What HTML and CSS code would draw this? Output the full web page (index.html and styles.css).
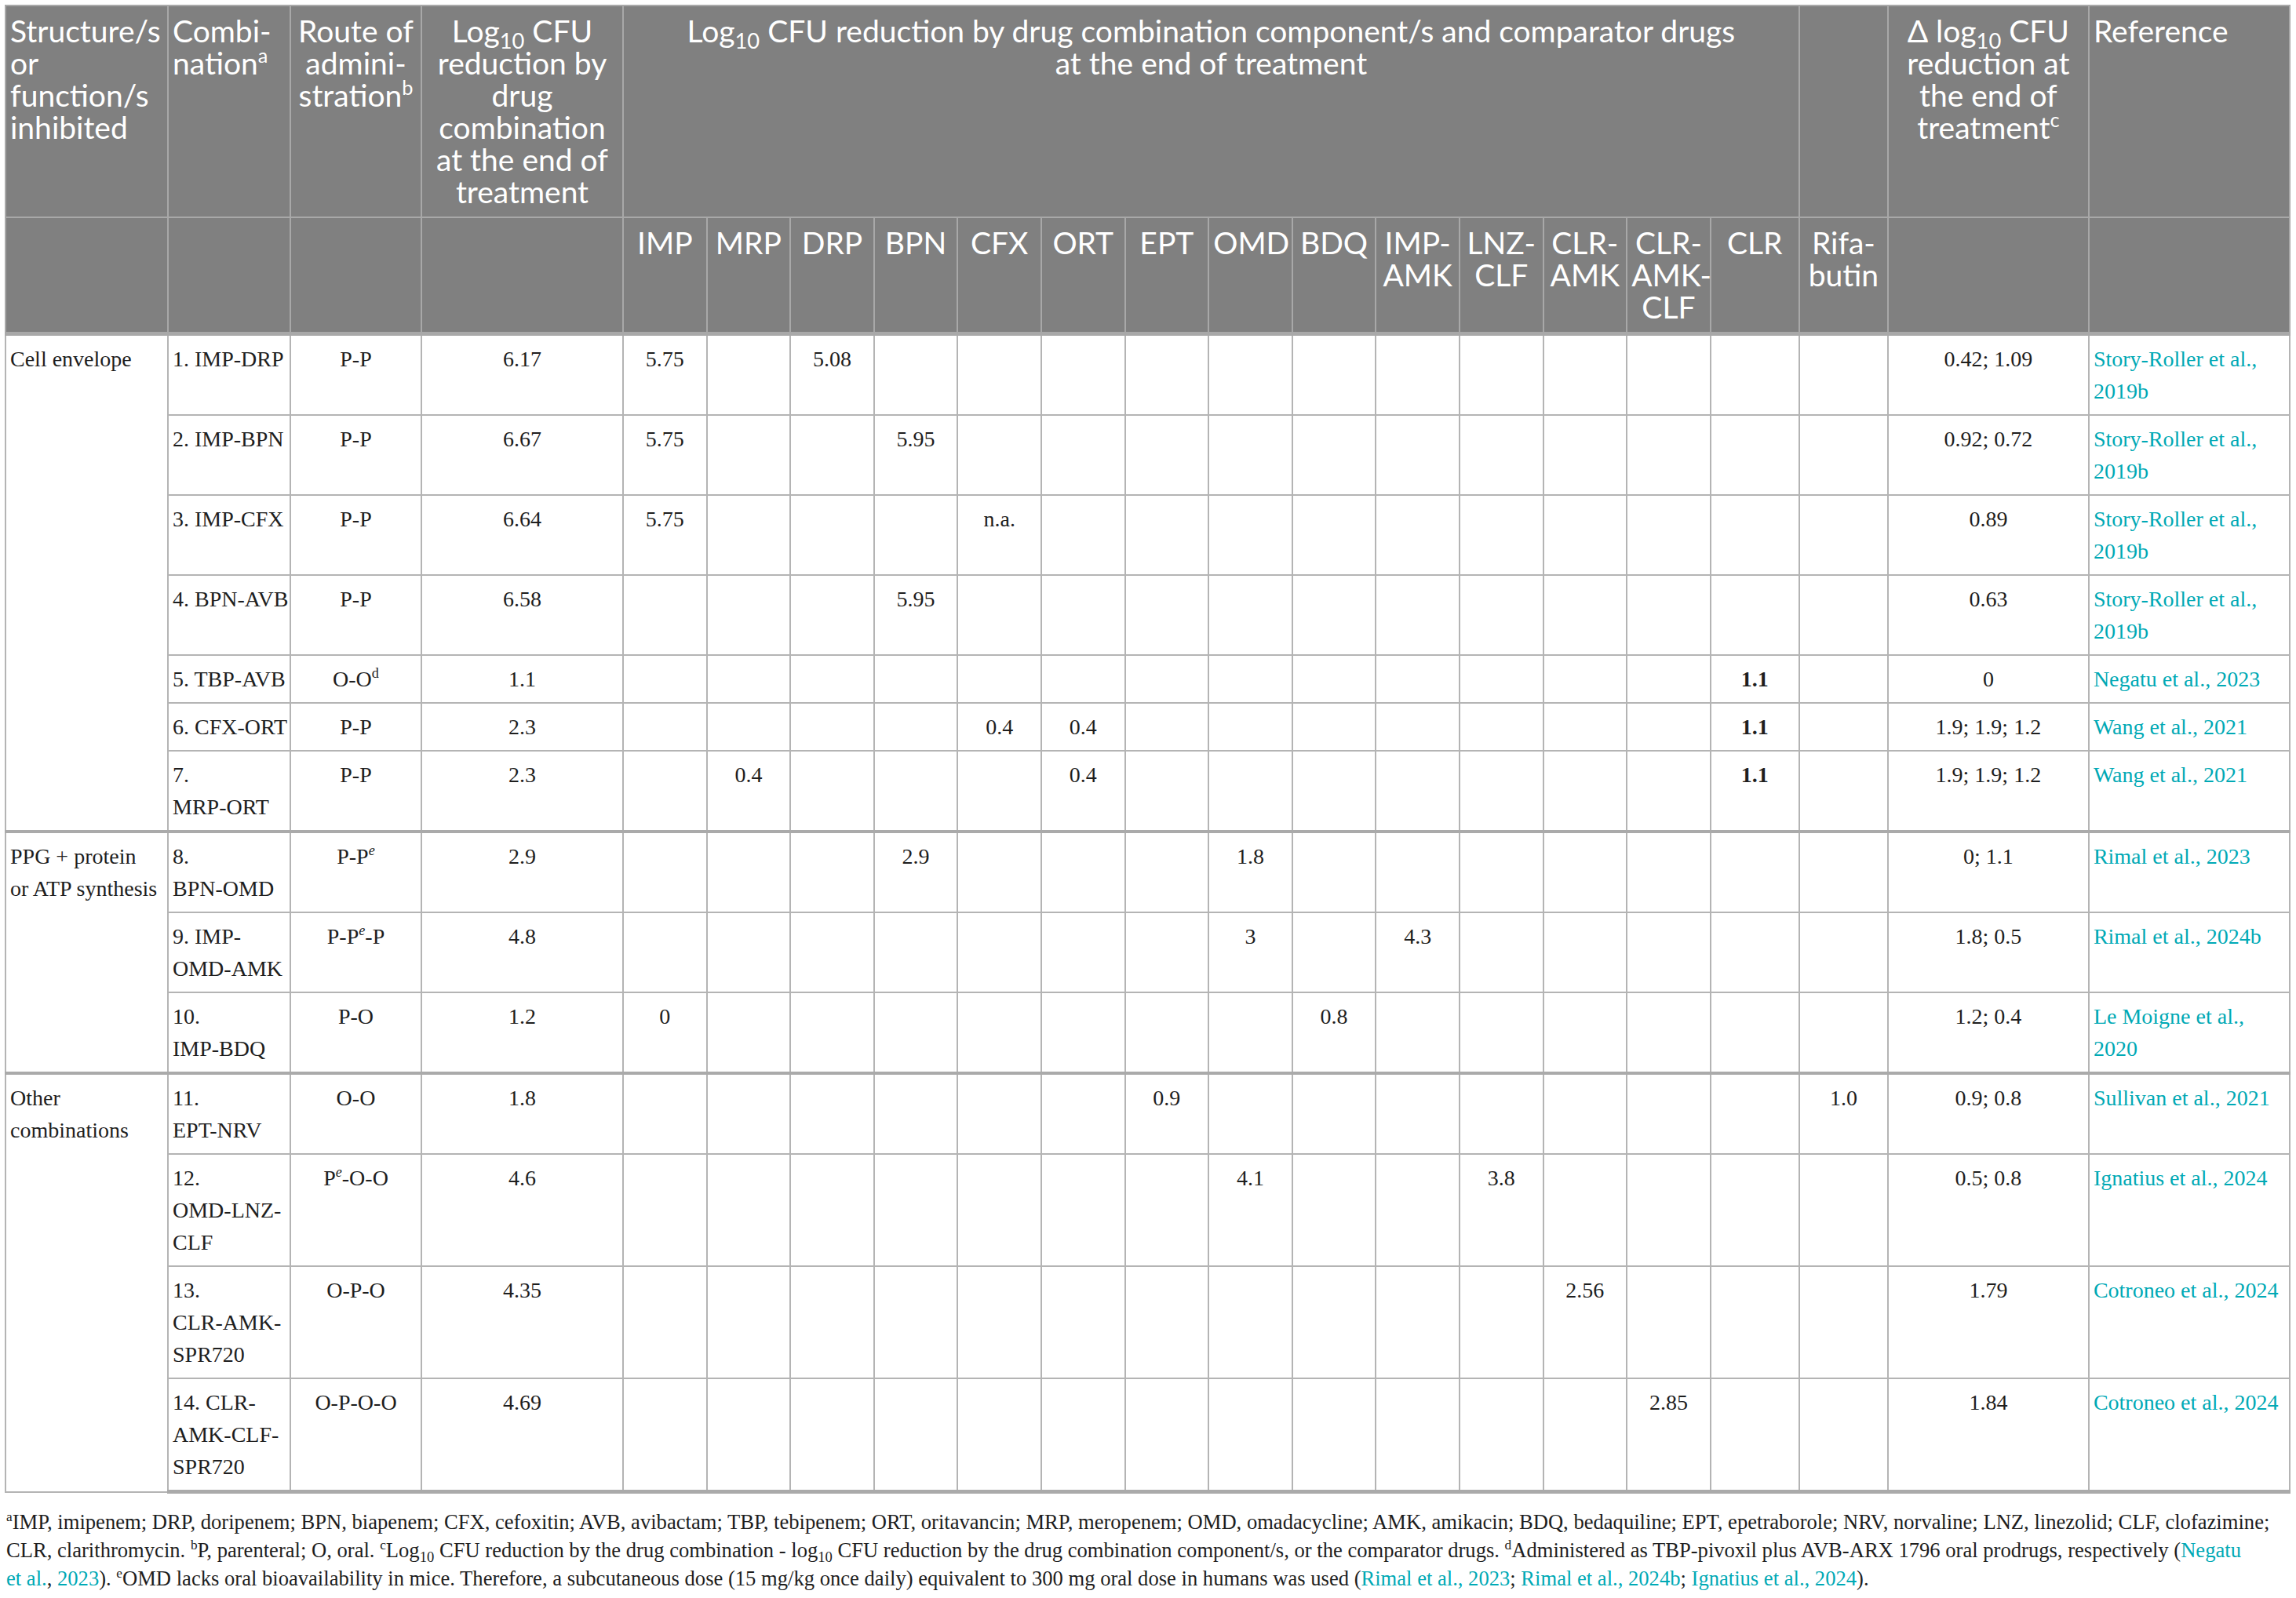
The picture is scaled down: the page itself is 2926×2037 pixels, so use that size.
FILE: index.html
```html
<!DOCTYPE html>
<html lang="en">
<head>
    <meta charset="UTF-8">
    <meta name="viewport" content="width=device-width, initial-scale=1.0">
    <title>Log10 CFU reduction by drug combinations</title>
    <link rel="stylesheet" href="styles.css">
</head>
<body>

    <table class="cfu-table">
        <colgroup>
            <col class="w-group">
            <col class="w-combo">
            <col class="w-route">
            <col class="w-total">
            <col class="w-drug"><col class="w-drug"><col class="w-drug"><col class="w-drug"><col class="w-drug">
            <col class="w-drug"><col class="w-drug"><col class="w-drug"><col class="w-drug"><col class="w-drug">
            <col class="w-drug"><col class="w-drug"><col class="w-drug">
            <col class="w-clr">
            <col class="w-clr">
            <col class="w-delta">
            <col class="w-ref">
        </colgroup>
        <thead>
            <tr>
                <th class="left">Structure/s<br>or<br>function/s<br>inhibited</th>
                <th class="left">Combi-<br>nation<sup>a</sup></th>
                <th>Route of<br>admini-<br>stration<sup>b</sup></th>
                <th>Log<sub>10</sub> CFU<br>reduction by<br>drug<br>combination<br>at the end of<br>treatment</th>
                <th colspan="14">Log<sub>10</sub> CFU reduction by drug combination component/s and comparator drugs<br>at the end of treatment</th>
                <th></th>
                <th>&Delta; log<sub>10</sub> CFU<br>reduction at<br>the end of<br>treatment<sup>c</sup></th>
                <th class="left">Reference</th>
            </tr>
            <tr class="drug-names">
                <th></th>
                <th></th>
                <th></th>
                <th></th>
                <th>IMP</th>
                <th>MRP</th>
                <th>DRP</th>
                <th>BPN</th>
                <th>CFX</th>
                <th>ORT</th>
                <th>EPT</th>
                <th>OMD</th>
                <th>BDQ</th>
                <th>IMP-<br>AMK</th>
                <th>LNZ-<br>CLF</th>
                <th>CLR-<br>AMK</th>
                <th>CLR-<br>AMK-<br>CLF</th>
                <th>CLR</th>
                <th>Rifa-<br>butin</th>
                <th></th>
                <th></th>
            </tr>
        </thead>
        <tbody>
            <!-- Cell envelope -->
            <tr>
                <td class="left" rowspan="7">Cell envelope</td>
                <td class="left">1. IMP-DRP</td>
                <td>P-P</td>
                <td>6.17</td>
                <td>5.75</td><td></td><td>5.08</td><td></td><td></td><td></td><td></td><td></td><td></td><td></td><td></td><td></td><td></td><td></td><td></td>
                <td>0.42; 1.09</td>
                <td class="left"><a href="#">Story-Roller et al.,<br>2019b</a></td>
            </tr>
            <tr>
                <td class="left">2. IMP-BPN</td>
                <td>P-P</td>
                <td>6.67</td>
                <td>5.75</td><td></td><td></td><td>5.95</td><td></td><td></td><td></td><td></td><td></td><td></td><td></td><td></td><td></td><td></td><td></td>
                <td>0.92; 0.72</td>
                <td class="left"><a href="#">Story-Roller et al.,<br>2019b</a></td>
            </tr>
            <tr>
                <td class="left">3. IMP-CFX</td>
                <td>P-P</td>
                <td>6.64</td>
                <td>5.75</td><td></td><td></td><td></td><td>n.a.</td><td></td><td></td><td></td><td></td><td></td><td></td><td></td><td></td><td></td><td></td>
                <td>0.89</td>
                <td class="left"><a href="#">Story-Roller et al.,<br>2019b</a></td>
            </tr>
            <tr>
                <td class="left">4. BPN-AVB</td>
                <td>P-P</td>
                <td>6.58</td>
                <td></td><td></td><td></td><td>5.95</td><td></td><td></td><td></td><td></td><td></td><td></td><td></td><td></td><td></td><td></td><td></td>
                <td>0.63</td>
                <td class="left"><a href="#">Story-Roller et al.,<br>2019b</a></td>
            </tr>
            <tr>
                <td class="left">5. TBP-AVB</td>
                <td>O-O<sup>d</sup></td>
                <td>1.1</td>
                <td></td><td></td><td></td><td></td><td></td><td></td><td></td><td></td><td></td><td></td><td></td><td></td><td></td><td><b>1.1</b></td><td></td>
                <td>0</td>
                <td class="left"><a href="#">Negatu et al., 2023</a></td>
            </tr>
            <tr>
                <td class="left">6. CFX-ORT</td>
                <td>P-P</td>
                <td>2.3</td>
                <td></td><td></td><td></td><td></td><td>0.4</td><td>0.4</td><td></td><td></td><td></td><td></td><td></td><td></td><td></td><td><b>1.1</b></td><td></td>
                <td>1.9; 1.9; 1.2</td>
                <td class="left"><a href="#">Wang et al., 2021</a></td>
            </tr>
            <tr>
                <td class="left">7.<br>MRP-ORT</td>
                <td>P-P</td>
                <td>2.3</td>
                <td></td><td>0.4</td><td></td><td></td><td></td><td>0.4</td><td></td><td></td><td></td><td></td><td></td><td></td><td></td><td><b>1.1</b></td><td></td>
                <td>1.9; 1.9; 1.2</td>
                <td class="left"><a href="#">Wang et al., 2021</a></td>
            </tr>

            <!-- PPG + protein or ATP synthesis -->
            <tr class="group-start">
                <td class="left" rowspan="3">PPG + protein<br>or ATP synthesis</td>
                <td class="left">8.<br>BPN-OMD</td>
                <td>P-P<sup><i>e</i></sup></td>
                <td>2.9</td>
                <td></td><td></td><td></td><td>2.9</td><td></td><td></td><td></td><td>1.8</td><td></td><td></td><td></td><td></td><td></td><td></td><td></td>
                <td>0; 1.1</td>
                <td class="left"><a href="#">Rimal et al., 2023</a></td>
            </tr>
            <tr>
                <td class="left">9. IMP-<br>OMD-AMK</td>
                <td>P-P<sup><i>e</i></sup>-P</td>
                <td>4.8</td>
                <td></td><td></td><td></td><td></td><td></td><td></td><td></td><td>3</td><td></td><td>4.3</td><td></td><td></td><td></td><td></td><td></td>
                <td>1.8; 0.5</td>
                <td class="left"><a href="#">Rimal et al., 2024b</a></td>
            </tr>
            <tr>
                <td class="left">10.<br>IMP-BDQ</td>
                <td>P-O</td>
                <td>1.2</td>
                <td>0</td><td></td><td></td><td></td><td></td><td></td><td></td><td></td><td>0.8</td><td></td><td></td><td></td><td></td><td></td><td></td>
                <td>1.2; 0.4</td>
                <td class="left"><a href="#">Le Moigne et al.,<br>2020</a></td>
            </tr>

            <!-- Other combinations -->
            <tr class="group-start">
                <td class="left" rowspan="4">Other<br>combinations</td>
                <td class="left">11.<br>EPT-NRV</td>
                <td>O-O</td>
                <td>1.8</td>
                <td></td><td></td><td></td><td></td><td></td><td></td><td>0.9</td><td></td><td></td><td></td><td></td><td></td><td></td><td></td><td>1.0</td>
                <td>0.9; 0.8</td>
                <td class="left"><a href="#">Sullivan et al., 2021</a></td>
            </tr>
            <tr>
                <td class="left">12.<br>OMD-LNZ-<br>CLF</td>
                <td>P<sup><i>e</i></sup>-O-O</td>
                <td>4.6</td>
                <td></td><td></td><td></td><td></td><td></td><td></td><td></td><td>4.1</td><td></td><td></td><td>3.8</td><td></td><td></td><td></td><td></td>
                <td>0.5; 0.8</td>
                <td class="left"><a href="#">Ignatius et al., 2024</a></td>
            </tr>
            <tr>
                <td class="left">13.<br>CLR-AMK-<br>SPR720</td>
                <td>O-P-O</td>
                <td>4.35</td>
                <td></td><td></td><td></td><td></td><td></td><td></td><td></td><td></td><td></td><td></td><td></td><td>2.56</td><td></td><td></td><td></td>
                <td>1.79</td>
                <td class="left"><a href="#">Cotroneo et al., 2024</a></td>
            </tr>
            <tr class="last-row">
                <td class="left">14. CLR-<br>AMK-CLF-<br>SPR720</td>
                <td>O-P-O-O</td>
                <td>4.69</td>
                <td></td><td></td><td></td><td></td><td></td><td></td><td></td><td></td><td></td><td></td><td></td><td></td><td>2.85</td><td></td><td></td>
                <td>1.84</td>
                <td class="left"><a href="#">Cotroneo et al., 2024</a></td>
            </tr>
        </tbody>
    </table>

    <div class="footnotes">
        <p><sup>a</sup>IMP, imipenem; DRP, doripenem; BPN, biapenem; CFX, cefoxitin; AVB, avibactam; TBP, tebipenem; ORT, oritavancin; MRP, meropenem; OMD, omadacycline; AMK, amikacin; BDQ, bedaquiline; EPT, epetraborole; NRV, norvaline; LNZ, linezolid; CLF, clofazimine;<br>CLR, clarithromycin. <sup>b</sup>P, parenteral; O, oral. <sup>c</sup>Log<sub>10</sub> CFU reduction by the drug combination - log<sub>10</sub> CFU reduction by the drug combination component/s, or the comparator drugs. <sup>d</sup>Administered as TBP-pivoxil plus AVB-ARX 1796 oral prodrugs, respectively (<a href="#">Negatu</a><br><a href="#">et al.</a>, <a href="#">2023</a>). <sup>e</sup>OMD lacks oral bioavailability in mice. Therefore, a subcutaneous dose (15 mg/kg once daily) equivalent to 300 mg oral dose in humans was used (<a href="#">Rimal et al., 2023</a>; <a href="#">Rimal et al., 2024b</a>; <a href="#">Ignatius et al., 2024</a>).</p>
    </div>

</body>
</html>
```

FILE: styles.css
```css
body {
    margin: 6px;
    background: #fff;
    font-family: "Liberation Serif", "Times New Roman", serif;
    color: #1e1e1e;
}

a {
    color: #00a9b5;
    text-decoration: none;
}

sup {
    font-size: 0.65em;
    line-height: 0;
    vertical-align: 0.6em;
}
sub {
    font-size: 0.7em;
    line-height: 0;
    vertical-align: -0.3em;
}

/* column widths */
.w-group { width: 207px; }
.w-combo { width: 156px; }
.w-route { width: 167px; }
.w-total { width: 257px; }
.w-drug  { width: 106.6px; }
.w-clr   { width: 113px; }
.w-delta { width: 256px; }
.w-ref   { width: 256px; }

.cfu-table {
    border-collapse: collapse;
    table-layout: fixed;
    width: 2911px;
    font-size: 28px;
    line-height: 41px;
}
.cfu-table th,
.cfu-table td {
    border: 2px solid #b4b4b4;
    padding: 9px 5px;
    vertical-align: top;
    text-align: center;
    white-space: nowrap;
}
.cfu-table th {
    background: #808080;
    color: #fff;
    font-family: Lato, "Liberation Sans", sans-serif;
    font-weight: normal;
    font-size: 39px;
    padding: 11px 5px;
    border-color: #a8a8a8;
}
.cfu-table .left {
    text-align: left;
}
.cfu-table thead tr.drug-names th {
    border-bottom: 5px solid #a8a8a8;
}
.cfu-table tr.group-start td {
    border-top: 4px solid #aaa;
}
.cfu-table tr.last-row td {
    border-bottom: 5px solid #aaa;
}

.footnotes {
    margin-top: 18px;
    font-size: 26.6px;
    line-height: 36px;
}
.footnotes p {
    margin: 0;
    padding-left: 2px;
    white-space: nowrap;
}
```
